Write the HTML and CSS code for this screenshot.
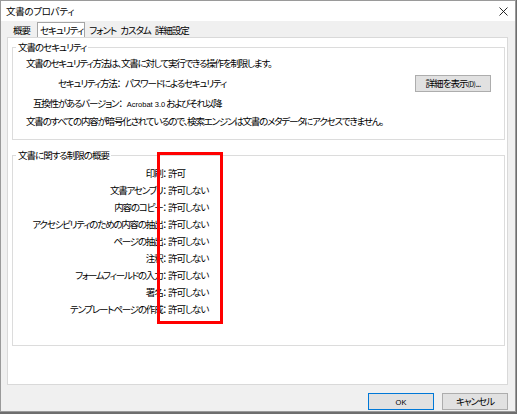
FILE: index.html
```html
<!DOCTYPE html>
<html lang="ja">
<head>
<meta charset="utf-8">
<title>文書のプロパティ</title>
<link rel="stylesheet" href="styles.css">
</head>
<body>
<div class="window">
  <div class="titlebar">
    <span class="title">文書のプロパティ</span>
    <svg class="close" width="9" height="9" viewBox="0 0 9 9"><path d="M0.5 0.5 L8.5 8.5 M8.5 0.5 L0.5 8.5" stroke="#111" stroke-width="0.9" fill="none"/></svg>
  </div>
  <div class="tabs">
    <span class="tab t1">概要</span>
    <span class="tab selected">セキュリティ</span>
    <span class="tab t3">フォント</span>
    <span class="tab t4">カスタム</span>
    <span class="tab t5">詳細設定</span>
  </div>
  <div class="panel">
    <fieldset class="group g1">
      <legend>文書のセキュリティ</legend>
      <div class="row r1">文書のセキュリティ方法は、文書に対して実行できる操作を制限します。</div>
      <div class="row r2"><span>セキュリティ方法：</span><span class="val">パスワードによるセキュリティ</span><button class="btn detail">詳細を表示<span class="small">(D)</span>...</button></div>
      <div class="row r3"><span>互換性があるバージョン：</span><span class="val"><span class="latin">Acrobat 3.0</span> およびそれ以降</span></div>
      <div class="row r4">文書のすべての内容が暗号化されているので、検索エンジンは文書のメタデータにアクセスできません。</div>
    </fieldset>
    <fieldset class="group g2">
      <legend>文書に関する制限の概要</legend>
      <div class="perm">
        <span class="lbl">印刷：</span><span class="v">許可</span>
        <span class="lbl">文書アセンブリ：</span><span class="v">許可しない</span>
        <span class="lbl">内容のコピー：</span><span class="v">許可しない</span>
        <span class="lbl">アクセシビリティのための内容の抽出：</span><span class="v">許可しない</span>
        <span class="lbl">ページの抽出：</span><span class="v">許可しない</span>
        <span class="lbl">注釈：</span><span class="v">許可しない</span>
        <span class="lbl">フォームフィールドの入力：</span><span class="v">許可しない</span>
        <span class="lbl">署名：</span><span class="v">許可しない</span>
        <span class="lbl">テンプレートページの作成：</span><span class="v">許可しない</span>
      </div>
      <div class="highlight"></div>
    </fieldset>
  </div>
  <div class="footer">
    <button class="btn ok"><span class="latin">OK</span></button>
    <button class="btn">キャンセル</button>
  </div>
</div>
</body>
</html>
```
FILE: styles.css
```css
html, body {
  margin: 0;
  padding: 0;
  background: #6e6e6e;
}
body {
  font-family: "Noto Sans CJK JP", "Noto Sans", sans-serif;
  font-size: 9.5px;
  font-feature-settings: "palt" 1;
  letter-spacing: -1.2px;
  color: #000;
  width: 517px;
  height: 414px;
  overflow: hidden;
}
.window {
  width: 516px;
  height: 412px;
  box-sizing: border-box;
  border: 1px solid #9a9a9a;
  background: #f0f0f0;
  display: flex;
  flex-direction: column;
}
.titlebar {
  height: 20px;
  background: #fff;
  display: flex;
  align-items: center;
  justify-content: space-between;
  padding: 0 7px 0 5px;
  flex: none;
}
.title {
  line-height: 12px;
  letter-spacing: -0.3px;
}
.close {
  display: block;
}
.tabs {
  height: 16px;
  display: flex;
  align-items: flex-end;
  padding-left: 10px;
  flex: none;
  letter-spacing: -1px;
}
.tab {
  height: 14px;
  line-height: 14px;
  padding: 0 2px;
}
.tab.selected {
  height: 14px;
  background: #fff;
  border: 1px solid #a5a5a5;
  border-bottom: none;
  padding: 0 1px 0 2px;
  margin: 0 2px 0 5px;
}
.panel {
  flex: none;
  height: 348px;
  box-sizing: border-box;
  margin: 0 7px 0 6px;
  background: #fff;
  border: 1px solid #d9d9d9;
  padding: 0 2px 0 4px;
}
.group {
  margin: 3px 0 0 0;
  padding: 0;
  border: 1px solid #dcdcdc;
  min-width: 0;
}
.group legend {
  padding: 0 2px;
  margin-left: 3px;
  line-height: 12px;
  letter-spacing: -1px;
}
.row {
  display: flex;
  align-items: center;
  height: 20px;
  white-space: nowrap;
}
.r1 { padding-left: 13px; }
.r2 { padding-left: 45px; }
.r3 { padding-left: 20px; }
.r4 { padding-left: 13px; height: 16px; margin-bottom: 10px; }
.val { margin-left: 5px; }
.latin {
  font-family: "Liberation Sans", "Noto Sans", sans-serif;
  font-size: 7.5px;
  letter-spacing: 0;
}
.btn {
  font-family: inherit;
  font-size: 9.5px;
  font-feature-settings: "palt" 1;
  letter-spacing: -1px;
  color: #000;
  background: #e1e1e1;
  border: 1px solid #adadad;
  border-radius: 0;
  padding: 0;
  margin: 0;
  height: 17px;
  line-height: 15px;
  box-sizing: border-box;
}
.detail {
  width: 76px;
  margin-left: auto;
  margin-right: 13px;
}
.small { font-size: 7px; letter-spacing: -0.5px; }
.g2 {
  margin-top: 9px;
  position: relative;
  padding-bottom: 28px;
}
.perm {
  display: grid;
  grid-template-columns: 153px auto;
  column-gap: 2px;
  grid-auto-rows: 17px;
  align-items: center;
  padding-top: 3px;
  white-space: nowrap;
}
.lbl { text-align: right; }
.v { letter-spacing: -1px; }
.highlight {
  position: absolute;
  left: 144px;
  top: -9px;
  width: 66px;
  height: 172px;
  box-sizing: border-box;
  border: 3px solid #ff0000;
}
.footer {
  flex: 1;
  display: flex;
  justify-content: flex-end;
  align-items: flex-start;
  gap: 8px;
  padding: 8px 7px 0 0;
}
.footer .btn {
  width: 66px;
}
.ok {
  border-color: #0078d7;
}
```
